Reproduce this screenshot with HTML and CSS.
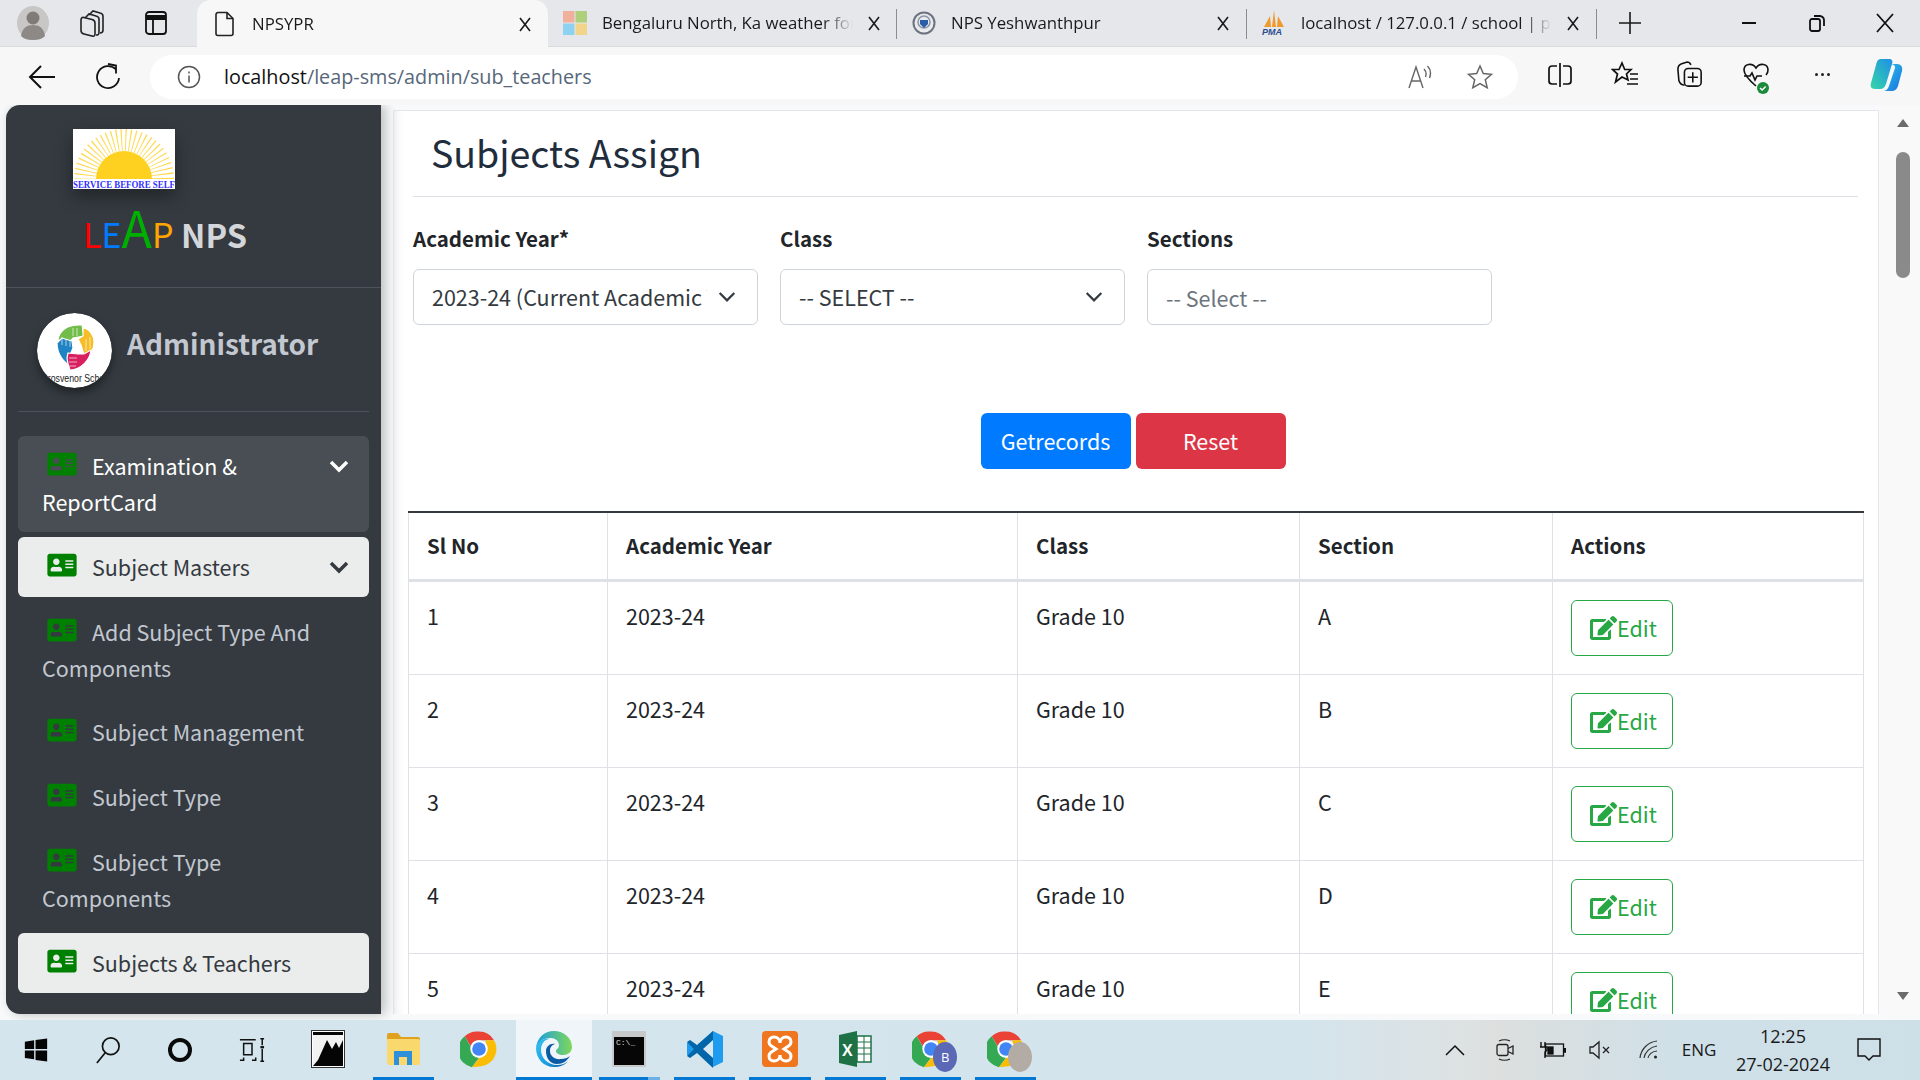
FILE: index.html
```html
<!DOCTYPE html>
<html>
  <head>
    <title>NPSYPR</title>
    <link rel="stylesheet" href="styles.css">
  </head>
  <body>
    <svg class="sprites" width="0" height="0">
      <symbol id="card" viewBox="0 0 576 512"><path d="M528 32H48C21.5 32 0 53.5 0 80v352c0 26.5 21.5 48 48 48h480c26.5 0 48-21.5 48-48V80c0-26.5-21.5-48-48-48zm-352 96c35.3 0 64 28.7 64 64s-28.7 64-64 64-64-28.7-64-64 28.7-64 64-64zm112 236.8c0 10.6-10 19.2-22.4 19.2H86.4C74 384 64 375.4 64 364.8v-19.2c0-31.8 30.1-57.6 67.2-57.6h5c12.3 5.1 25.7 8 39.8 8s27.6-2.9 39.8-8h5c37.1 0 67.2 25.8 67.2 57.6v19.2zM512 312c0 4.4-3.6 8-8 8H360c-4.4 0-8-3.6-8-8v-16c0-4.4 3.6-8 8-8h144c4.4 0 8 3.6 8 8v16zm0-64c0 4.4-3.6 8-8 8H360c-4.4 0-8-3.6-8-8v-16c0-4.4 3.6-8 8-8h144c4.4 0 8 3.6 8 8v16zm0-64c0 4.4-3.6 8-8 8H360c-4.4 0-8-3.6-8-8v-16c0-4.4 3.6-8 8-8h144c4.4 0 8 3.6 8 8v16z"/></symbol>
      <symbol id="edit" viewBox="0 0 576 512"><path d="M402.6 83.2l90.2 90.2c3.8 3.8 3.8 10 0 13.8L274.4 405.6l-92.8 10.3c-12.4 1.4-22.9-9.1-21.5-21.5l10.3-92.8L388.8 83.2c3.8-3.8 10-3.8 13.8 0zm162-22.9l-48.8-48.8c-15.2-15.2-39.9-15.2-55.2 0l-35.4 35.4c-3.8 3.8-3.8 10 0 13.8l90.2 90.2c3.8 3.8 10 3.8 13.8 0l35.4-35.4c15.2-15.3 15.2-40 0-55.2zM384 346.2V448H64V128h229.8c3.2 0 6.2-1.3 8.5-3.5l40-40c7.6-7.6 2.2-20.5-8.5-20.5H48C21.5 64 0 85.5 0 112v352c0 26.5 21.5 48 48 48h352c26.5 0 48-21.5 48-48V306.2c0-10.7-12.9-16-20.5-8.5l-40 40c-2.2 2.3-3.5 5.3-3.5 8.5z"/></symbol>
      <symbol id="close" viewBox="0 0 24 24"><path d="M7 6l10 13M17 6L7 19" fill="none" stroke="#1a1a1a" stroke-width="1.6"/></symbol>
      <symbol id="chrome" viewBox="0 0 48 48">
        <path d="M24 2a22 22 0 0 1 19 11H24a11 11 0 0 0-10.5 7.5L6 8A22 22 0 0 1 24 2z" fill="#ea4335"/>
        <path d="M6 8l9.5 16.5A10 10 0 0 0 24 35l-9 11.9A22 22 0 0 1 6 8z" fill="#34a853"/>
        <path d="M43 13a22 22 0 0 1-19 33l-9 0.9 9.5-12A11 11 0 0 0 33.5 19L32 13z" fill="#fbbc04"/>
        <circle cx="24" cy="24" r="11" fill="#fff"/>
        <circle cx="24" cy="24" r="8.6" fill="#4285f4"/>
      </symbol>
      <linearGradient id="edgeA" x1="0" y1="0" x2="1" y2="1"><stop offset="0" stop-color="#35c1f1"/><stop offset=".6" stop-color="#1b9de2"/><stop offset="1" stop-color="#0c59a4"/></linearGradient>
      <linearGradient id="edgeB" x1="0" y1="0" x2="1" y2="0"><stop offset="0" stop-color="#1b9de2"/><stop offset="1" stop-color="#7fd857"/></linearGradient>
      <linearGradient id="copA" x1="0" y1="0" x2="1" y2="1"><stop offset="0" stop-color="#2bc8e8"/><stop offset="1" stop-color="#1a6fe0"/></linearGradient>
      <linearGradient id="copB" x1="0" y1="1" x2="1" y2="0"><stop offset="0" stop-color="#35d6a6"/><stop offset="1" stop-color="#1f8fe8"/></linearGradient>
    </svg>

    <div class="tabbar">
      <div class="tb-slot slot-profile">
        <svg width="34" height="34" viewBox="0 0 34 34"><ellipse cx="17" cy="17" rx="16" ry="17" fill="#c9c7c5"/><circle cx="17" cy="12" r="6.5" fill="#7f7b78"/><path d="M5 30c1-8 6-11 12-11s11 3 12 11c-3 3-7 4-12 4s-9-1-12-4z" fill="#8d8986"/></svg>
      </div>
      <div class="tb-slot slot-work">
        <svg width="26" height="28" viewBox="0 0 26 28" fill="none" stroke="#222" stroke-width="1.6"><path d="M10 6l4-4 7 2c2 .5 3 1.500 3 3v14c0 3-2 3-3 3"/><path d="M6 9l4-4 7 2c2 .5 3 1.500 3 3v13c0 3-1 3-3 3"/><path d="M2 11c0-2 1-3 3-2.500l8 2c2 .5 3 1.500 3 3.500v11c0 2-1 2.500-3 2l-8-2c-2-.5-3-1.500-3-3.500z"/></svg>
      </div>
      <div class="tb-slot slot-vtabs">
        <svg width="22" height="26" viewBox="0 0 22 26" fill="none" stroke="#111" stroke-width="1.8"><rect x="1" y="2" width="20" height="22" rx="3"/><path d="M1 7.500h20" stroke-width="5"/><path d="M8 8v16"/></svg>
      </div>

      <div class="tab tab-active">
        <span class="fav">
          <svg width="20" height="26" viewBox="0 0 20 26" fill="none" stroke="#222" stroke-width="1.600"><path d="M3 1.500h9l6 6v15a2 2 0 0 1-2 2H3a2 2 0 0 1-2-2v-19a2 2 0 0 1 2-2z"/><path d="M12 1.500v6h6"/></svg>
        </span>
        <span class="tab-title">NPSYPR</span>
        <svg class="tab-x"><use href="#close"/></svg>
      </div>
      <div class="tab tab-first">
        <span class="fav">
          <svg width="24" height="24" viewBox="0 0 24 24"><rect width="11.500" height="11.500" fill="#f0b09c"/><rect x="12.500" width="11.500" height="11.500" fill="#aecf7c"/><rect y="12.500" width="11.500" height="11.500" fill="#8fd1f0"/><rect x="12.500" y="12.500" width="11.500" height="11.500" fill="#f2d58a"/></svg>
        </span>
        <span class="tab-title">Bengaluru North, Ka weather forecast</span>
        <svg class="tab-x"><use href="#close"/></svg>
      </div>
      <div class="tab-sep"></div>
      <div class="tab">
        <span class="fav">
          <svg width="24" height="24" viewBox="0 0 24 24"><circle cx="12" cy="12" r="10.500" fill="#e9eaee" stroke="#6d7480" stroke-width="2"/><circle cx="12" cy="11" r="6" fill="none" stroke="#8a94a3" stroke-width="1.500"/><path d="M8 9h8v4l-4 4-4-4z" fill="#2c5da8"/></svg>
        </span>
        <span class="tab-title">NPS Yeshwanthpur</span>
        <svg class="tab-x"><use href="#close"/></svg>
      </div>
      <div class="tab-sep"></div>
      <div class="tab">
        <span class="fav">
          <svg width="24" height="26" viewBox="0 0 24 26"><path d="M12 0l2 17h-4zM8 6l1 11H2zM16 6l6 11h-7z" fill="#ef9a2d"/><text x="0" y="25" class="pma">PMA</text></svg>
        </span>
        <span class="tab-title">localhost / 127.0.0.1 / school | phpMyAdmin</span>
        <svg class="tab-x"><use href="#close"/></svg>
      </div>
      <div class="tab-sep"></div>
      <div class="tb-slot slot-plus">
        <svg width="26" height="26" viewBox="0 0 26 26" stroke="#1a1a1a" stroke-width="1.600"><path d="M13 2v22M2 13h22"/></svg>
      </div>
      <div class="win-btns">
        <div class="tb-slot slot-win"><svg width="16" height="16" viewBox="0 0 16 16" stroke="#111" stroke-width="2"><path d="M1 8h14"/></svg></div>
        <div class="tb-slot slot-win"><svg width="16" height="18" viewBox="0 0 16 18" fill="none" stroke="#111" stroke-width="1.800"><rect x="1" y="5" width="10" height="12" rx="2"/><path d="M5 2h6c2 0 4 2 4 4v6"/></svg></div>
        <div class="tb-slot slot-win"><svg width="20" height="20" viewBox="0 0 20 20" stroke="#111" stroke-width="1.800"><path d="M2 1l16 18M18 1L2 19"/></svg></div>
      </div>
    </div>

    <div class="toolbar">
      <div class="tool tool-back">
        <svg width="28" height="26" viewBox="0 0 28 26" fill="none" stroke="#111" stroke-width="2"><path d="M27 13H2M13 2L2 13l11 11"/></svg>
      </div>
      <div class="tool tool-reload">
        <svg width="26" height="28" viewBox="0 0 26 28" fill="none" stroke="#111" stroke-width="1.800"><path d="M21 6.500A11 11 0 1 0 24 15"/><path d="M13 1l8 1.500v8"/></svg>
      </div>
      <div class="addressbar">
        <svg class="addr-info" width="24" height="24" viewBox="0 0 24 24" fill="none" stroke="#555" stroke-width="1.500"><circle cx="12" cy="12" r="10.500"/><path d="M12 10.500v7M12 6.500v2"/></svg>
        <span class="addr-url"><b>localhost</b>/leap-sms/admin/sub_teachers</span>
        <span class="addr-read">
          <svg width="26" height="26" viewBox="0 0 26 26" fill="none" stroke="#666" stroke-width="1.400"><path d="M2 24l7-21 7 21M4.500 17h9"/><path d="M17 5c2 2 2.500 5 1.500 8M20.500 2c3 3 3.500 8 2 12"/></svg>
        </span>
        <span class="addr-star">
          <svg width="26" height="26" viewBox="0 0 26 26" fill="none" stroke="#666" stroke-width="1.500"><path d="M13 2l3.300 7.500 8.200.8-6.200 5.400 1.900 8L13 19.500l-7.200 4.200 1.900-8L1.500 10.300l8.200-.8z"/></svg>
        </span>
      </div>
      <div class="tools-right">
        <div class="tool">
          <svg width="26" height="26" viewBox="0 0 26 26" fill="none" stroke="#111" stroke-width="1.700"><path d="M13 1v24"/><path d="M10 4H5a3 3 0 0 0-3 3v12a3 3 0 0 0 3 3h5M16 4h5a3 3 0 0 1 3 3v12a3 3 0 0 1-3 3h-5"/></svg>
        </div>
        <div class="tool">
          <svg width="28" height="28" viewBox="0 0 28 28" fill="none" stroke="#111" stroke-width="1.700"><path d="M11 2l2.700 6.500H20l-4.500 4.500 1.500 6L11 16l-6.500 5 2-8L1.500 8.500H8z"/><path d="M19 13h8M19 18h8M16 23h11"/></svg>
        </div>
        <div class="tool">
          <svg width="26" height="30" viewBox="0 0 28 30" fill="none" stroke="#111" stroke-width="1.700"><path d="M8 26c-3 0-5-2-6-5L1 9c0-3 1-5 4-6l6-2c2 0 3 1 4 3"/><rect x="8" y="8" width="18" height="19" rx="4"/><path d="M17 12v11M11.500 17.500h11"/></svg>
        </div>
        <div class="tool tool-health">
          <svg width="30" height="32" viewBox="0 0 30 32" fill="none" stroke="#111" stroke-width="1.600"><path d="M14 23C7 17 2 12 2 7c0-6 8-8 12-2 4-6 12-4 12 2 0 2-1 4-2 5"/><path d="M2 13h6l2-3 3 7 2-4h5"/><circle cx="21" cy="25" r="6" fill="#1a8a3c" stroke="none"/><path d="M18 25l2.200 2 3.500-3.500" stroke="#fff" stroke-width="1.500"/></svg>
        </div>
        <div class="tool tool-dots"><i></i><i></i><i></i></div>
        <div class="tool">
          <svg width="36" height="36" viewBox="0 0 36 36"><path d="M12 2h8c3 0 4 2 3 5l-6 20c-1 3-3 5-6 5H6c-4 0-5-3-4-6l5-18C8 4 9 2 12 2z" fill="url(#copB)"/><path d="M20 7h8c4 0 6 3 5 7l-4 15c-1 3-3 5-7 5h-8c3 0 5-2 6-5l6-18c.5-2-1-4-6-4z" fill="url(#copA)"/></svg>
        </div>
      </div>
    </div>

    <div class="page">
      <aside class="sidebar">
        <div class="brand">
          <svg class="brand-logo" width="102" height="60" viewBox="0 0 102 60">
            <rect width="102" height="60" fill="#fff"/>
            <circle cx="51" cy="50" r="39" fill="none" stroke="#ffd84a" stroke-width="22" stroke-dasharray="1 3.200"/>
            <circle cx="51" cy="50" r="28" fill="#fed121"/>
            <rect y="50" width="102" height="10" fill="#fff"/>
            <text x="0" y="59" textLength="102" lengthAdjust="spacingAndGlyphs" class="logo-motto">SERVICE BEFORE SELF</text>
          </svg>
          <div class="brand-name"><span class="l-red">L</span><span class="l-blue">E</span><span class="l-green">A</span><span class="l-orange">P</span> <b>NPS</b></div>
        </div>
        <div class="userpanel">
          <svg class="user-img" width="75" height="75" viewBox="0 0 75 75">
            <defs><clipPath id="avatarClip"><circle cx="37.500" cy="37.500" r="37.500"/></clipPath></defs>
            <g clip-path="url(#avatarClip)">
              <rect width="75" height="75" fill="#fff"/>
              <g class="avatar-hands">
                <path d="M21 27c1-9 9-16 24-15l2 11-11 2-4 5c-4-2-8-3-11-3z" fill="#72bd4a"/>
                <path d="M46 15c7 1 11 8 11 14 0 6-2 11-6 14l-4-1-3-10-3-6 5-3z" fill="#f6bd27"/>
                <path d="M20 30l5-5 3 1 7 2 1 7-3 7 2 11c-8-2-15-12-15-23z" fill="#1f83c4"/>
                <path d="M31 40l10 1 6 0 7-4c-1 10-10 20-21 20l-2-6-1-6z" fill="#d81f5f"/>
              </g>
              <path class="avatar-fingers" d="M25 25v7M29 26v7M33 28v6M32 45h8M32 49h8M32 53h7M49 26v12M53 24v12M40 15v8M36 15v8"/>
              <text x="4" y="69" textLength="70" lengthAdjust="spacingAndGlyphs" class="avatar-text">Grosvenor School</text>
            </g>
          </svg>
          <span class="user-name">Administrator</span>
        </div>
        <nav class="nav">
          <a class="nav-link nav-open">
            <svg class="nav-icon"><use href="#card"/></svg>Examination &amp; ReportCard
            <svg class="nav-arrow" viewBox="0 0 20 14"><path d="M2 3l8 8 8-8"/></svg>
          </a>
          <a class="nav-link nav-active">
            <svg class="nav-icon"><use href="#card"/></svg>Subject Masters
            <svg class="nav-arrow" viewBox="0 0 20 14"><path d="M2 3l8 8 8-8"/></svg>
          </a>
          <a class="nav-link"><svg class="nav-icon"><use href="#card"/></svg>Add Subject Type And Components</a>
          <a class="nav-link"><svg class="nav-icon"><use href="#card"/></svg>Subject Management</a>
          <a class="nav-link"><svg class="nav-icon"><use href="#card"/></svg>Subject Type</a>
          <a class="nav-link"><svg class="nav-icon"><use href="#card"/></svg>Subject Type Components</a>
          <a class="nav-link nav-active"><svg class="nav-icon"><use href="#card"/></svg>Subjects &amp; Teachers</a>
        </nav>
      </aside>

      <main class="content">
        <div class="card">
          <h1 class="card-title">Subjects Assign</h1>
          <div class="filters">
            <div class="field">
              <label>Academic Year*</label>
              <div class="select-wrap">
                <select class="form-control"><option>2023-24 (Current Academic Year)</option></select>
                <svg class="select-arrow" viewBox="0 0 16 10"><path d="M1.500 1.500L8 8l6.500-6.500"/></svg>
              </div>
            </div>
            <div class="field">
              <label>Class</label>
              <div class="select-wrap">
                <select class="form-control"><option>-- SELECT --</option></select>
                <svg class="select-arrow" viewBox="0 0 16 10"><path d="M1.500 1.500L8 8l6.500-6.500"/></svg>
              </div>
            </div>
            <div class="field">
              <label>Sections</label>
              <input class="form-control" placeholder="-- Select --">
            </div>
          </div>
          <div class="form-actions">
            <button class="btn btn-primary">Getrecords</button>
            <button class="btn btn-danger">Reset</button>
          </div>
          <table class="data-table">
            <thead>
              <tr><th class="col-no">Sl No</th><th class="col-year">Academic Year</th><th class="col-class">Class</th><th class="col-section">Section</th><th>Actions</th></tr>
            </thead>
            <tbody>
              <tr><td>1</td><td>2023-24</td><td>Grade 10</td><td>A</td><td><button class="btn btn-edit"><svg><use href="#edit"/></svg>Edit</button></td></tr>
              <tr><td>2</td><td>2023-24</td><td>Grade 10</td><td>B</td><td><button class="btn btn-edit"><svg><use href="#edit"/></svg>Edit</button></td></tr>
              <tr><td>3</td><td>2023-24</td><td>Grade 10</td><td>C</td><td><button class="btn btn-edit"><svg><use href="#edit"/></svg>Edit</button></td></tr>
              <tr><td>4</td><td>2023-24</td><td>Grade 10</td><td>D</td><td><button class="btn btn-edit"><svg><use href="#edit"/></svg>Edit</button></td></tr>
              <tr><td>5</td><td>2023-24</td><td>Grade 10</td><td>E</td><td><button class="btn btn-edit"><svg><use href="#edit"/></svg>Edit</button></td></tr>
            </tbody>
          </table>
        </div>
      </main>

      <div class="scrollbar">
        <svg width="14" height="10" viewBox="0 0 14 10"><path d="M7 1l6 8H1z" fill="#6b6b6b"/></svg>
        <div class="scroll-thumb"></div>
        <svg class="scroll-down" width="14" height="10" viewBox="0 0 14 10"><path d="M7 9L1 1h12z" fill="#6b6b6b"/></svg>
      </div>
    </div>

    <div class="taskbar">
      <div class="task task-sys">
        <svg width="26" height="28" viewBox="0 0 28 28" fill="#050505"><path d="M2 5l10-1.500V13H2zM13.500 3.300L26 1.500V13H13.500zM2 14.500h10V24L2 22.500zM13.500 14.500H26v12l-12.500-1.800z"/></svg>
      </div>
      <div class="task task-sys">
        <svg width="26" height="30" viewBox="0 0 28 30" fill="none" stroke="#111" stroke-width="1.800"><circle cx="17" cy="11" r="9"/><path d="M11 18L2 29"/></svg>
      </div>
      <div class="task task-sys">
        <svg width="26" height="26" viewBox="0 0 26 26" fill="none" stroke="#0a0a0a" stroke-width="4"><circle cx="13" cy="13" r="10"/></svg>
      </div>
      <div class="task task-sys">
        <svg width="26" height="28" viewBox="0 0 28 28" fill="none" stroke="#111" stroke-width="1.600"><path d="M1 3h17M1 25h4v-3M14 25h4v-3M5 7h9v12H5zM23 2h4M25 2v7M25 13v13M23 26h4"/><path d="M23 11h4" stroke-width="2.500"/></svg>
      </div>
      <div class="task task-app task-photos">
        <svg width="34" height="38" viewBox="0 0 34 38"><rect x="0.500" y="0.500" width="33" height="37" fill="#fff" stroke="#333"/><rect x="2" y="2" width="30" height="34" fill="#050505"/><path d="M2 5h30v5l-4 8-3-6-4 7-5-9-9 20-5 6z" fill="#fff" opacity=".95"/></svg>
      </div>
      <div class="task task-app task-run">
        <svg width="34" height="36" viewBox="0 0 34 36"><path d="M1 4a2 2 0 0 1 2-2h9l3 4h17a2 2 0 0 1 2 2v3H1z" fill="#e0a11f"/><path d="M1 8h31a2 2 0 0 1 2 2v22a2 2 0 0 1-2 2H3a2 2 0 0 1-2-2z" fill="#f9d86d"/><path d="M8 34V20h18v14h-5v-8h-8v8z" fill="#2e8fdb"/></svg>
      </div>
      <div class="task task-app">
        <svg width="38" height="38"><use href="#chrome"/></svg>
      </div>
      <div class="task task-edge">
        <svg width="38" height="38" viewBox="0 0 38 38"><path d="M19 1c10 0 18 7 18 16 0 5-4 8-9 8-4 0-7-2-7-4 0-2 3-2 3-6 0-4-4-7-8-7C8 8 3 12 1 18 2 8 9 1 19 1z" fill="url(#edgeB)"/><path d="M1 18c1-6 7-10 13-9-5 1-8 5-8 11 0 8 7 15 16 15 4 0 8-1 11-4-3 4-8 6-14 6C9 37 1 29 1 18z" fill="url(#edgeA)"/><path d="M11 21c0-4 4-8 9-7-3 1-5 3-5 7 0 5 5 9 11 8 3 0 7-1 9-3-3 5-7 8-13 8-7 0-11-6-11-13z" fill="#0b5aa6"/></svg>
      </div>
      <div class="task task-app task-run task-run-two">
        <svg width="34" height="36" viewBox="0 0 34 36"><rect width="34" height="36" rx="1" fill="#c6c8ca"/><rect x="2" y="6" width="30" height="28" fill="#060606"/><text x="4" y="14" class="cmd-text">C:\_</text></svg>
      </div>
      <div class="task task-app task-run">
        <svg width="38" height="38" viewBox="0 0 38 38"><path d="M27 1l10 5v26l-10 5-16-15-7 5-3-2v-12l3-2 7 5z" fill="#1f9cf0"/><path d="M27 1L11 15 4 10l-3 2 7 7-7 7 3 2 7-5 16 15z" fill="#0065a9"/><path d="M27 10v18l-10-9z" fill="#d7e8f3"/></svg>
      </div>
      <div class="task task-app task-run">
        <svg width="36" height="36" viewBox="0 0 36 36"><rect width="36" height="36" rx="4" fill="#f0751f"/><path d="M18 12c0-4-3-6-6-6s-5 2-5 5 2 4 4 5l3 2-3 2c-2 1-4 2-4 5s2 5 5 5 6-2 6-6c0 4 3 6 6 6s5-2 5-5-2-4-4-5l-3-2 3-2c2-1 4-2 4-5s-2-5-5-5-6 2-6 6z" fill="none" stroke="#fff" stroke-width="3"/></svg>
      </div>
      <div class="task task-app task-run">
        <svg width="34" height="36" viewBox="0 0 34 36"><path d="M1 4l18-4v36L1 32z" fill="#1e7145"/><rect x="19" y="5" width="14" height="26" fill="#fff" stroke="#1e7145" stroke-width="1.500"/><path d="M19 11h14M19 17h14M19 23h14M26 5v26" stroke="#1e7145"/><text x="4" y="25" class="xl-text">X</text></svg>
      </div>
      <div class="task task-app task-run task-over">
        <svg width="38" height="38"><use href="#chrome"/></svg>
        <span class="task-badge badge-b">B</span>
      </div>
      <div class="task task-app task-run task-over">
        <svg width="38" height="38"><use href="#chrome"/></svg>
        <span class="task-badge badge-pic"></span>
      </div>

      <div class="tray">
        <div class="tray-item tray-w50">
          <svg width="20" height="12" viewBox="0 0 20 12" fill="none" stroke="#111" stroke-width="1.500"><path d="M1 11l9-9 9 9"/></svg>
        </div>
        <div class="tray-item tray-w50">
          <svg width="18" height="24" viewBox="0 0 18 24" fill="none" stroke="#222" stroke-width="1.300"><rect x="1" y="6.500" width="11" height="11" rx="2"/><path d="M12 10.500l5-2.500v8l-5-2.500M3 3c3-1.500 8-1.500 11 0M3 21c3 1.500 8 1.500 11 0"/></svg>
        </div>
        <div class="tray-item tray-w45">
          <svg width="26" height="18" viewBox="0 0 26 18" fill="none" stroke="#111" stroke-width="1.300"><rect x="5.500" y="3" width="18" height="12"/><path d="M24 7v4h1.500V7" fill="#111"/><rect x="8" y="6" width="5" height="7" fill="#111"/><path d="M1 1v5M5 1v5M0 6h7v3l-2 2v6" stroke-width="1.400"/></svg>
        </div>
        <div class="tray-item tray-w49">
          <svg width="22" height="20" viewBox="0 0 22 20" fill="none" stroke="#222" stroke-width="1.300"><path d="M1 7v6h3l6 5V2L4 7zM14 7l6 6M20 7l-6 6"/></svg>
        </div>
        <div class="tray-item tray-w50">
          <svg width="20" height="20" viewBox="0 0 20 20" fill="none" stroke="#333" stroke-width="1.200"><path d="M1 18C2 9 9 2 18 1M5 18c1-6 6-11 13-12M9 18c.5-3 4-7 9-7"/><circle cx="16.500" cy="17" r="1.500" fill="#222" stroke="none"/></svg>
        </div>
        <div class="tray-item tray-w50 tray-lang">ENG</div>
        <div class="tray-clock"><span>12:25</span><span>27-02-2024</span></div>
        <div class="tray-item tray-notify">
          <svg width="24" height="24" viewBox="0 0 24 24" fill="none" stroke="#111" stroke-width="1.400"><path d="M1 1h22v17h-7l-4 4-4-4H1z"/></svg>
        </div>
      </div>
    </div>
  </body>
</html>
```

FILE: styles.css
```css
/* Everything on the page is at 150% browser zoom, so the base line is 36px */
* {
  box-sizing: border-box;
}

html,
body {
  height: 100%;
}

body {
  margin: 0;
  width: 1920px;
  height: 1080px;
  overflow: hidden;
  display: flex;
  flex-direction: column;
  font-family: "Noto Sans CJK SC", "Noto Sans", sans-serif;
  font-size: 21.500px;
  line-height: 36px;
  color: #212529;
  background: #f7f7f7;
}

.sprites {
  position: absolute;
}

/* Browser tabs */
.tabbar {
  height: 47px;
  flex: none;
  display: flex;
  align-items: flex-end;
  background: #e5e7eb;
  font-family: "Open Sans", sans-serif;
  font-size: 16.800px;
  line-height: 24px;
  color: #1a1a1a;
  border-bottom: 1px solid #d9dadc;
}

.tb-slot {
  height: 46px;
  flex: none;
  display: flex;
  align-items: center;
  justify-content: center;
}

.slot-profile { width: 66px; }
.slot-work { width: 52px; }
.slot-vtabs { width: 76px; }
.slot-plus { width: 66px; }
.slot-win { width: 68px; }

.slot-vtabs {
  margin-right: 3px;
}

.win-btns {
  margin-left: auto;
  margin-right: 1px;
  display: flex;
}

.tab {
  width: 349px;
  height: 46px;
  flex: none;
  padding: 0 11px 0 15px;
  display: flex;
  align-items: center;
  overflow: hidden;
}

.tab-active {
  width: 351px;
  height: 47px;
  margin-bottom: -1px;
  padding-left: 16px;
  background: #f7f7f7;
  border-radius: 14px 14px 0 0;
}

.fav {
  width: 24px;
  height: 26px;
  flex: none;
  margin-right: 15px;
  display: flex;
  align-items: center;
  justify-content: center;
}

.tab-title {
  flex: 1;
  min-width: 0;
  margin-right: 9px;
  white-space: nowrap;
  overflow: hidden;
  -webkit-mask-image: linear-gradient(to right, #000 calc(100% - 30px), transparent 100%);
  mask-image: linear-gradient(to right, #000 calc(100% - 30px), transparent 100%);
}

.tab-x {
  width: 24px;
  height: 24px;
  flex: none;
}

.tab-sep {
  width: 1px;
  height: 30px;
  flex: none;
  margin-bottom: 7px;
  background: #8b8d90;
}

.tab-first + .tab-sep {
  margin-left: -1px;
}

.pma {
  font-family: "Liberation Sans", sans-serif;
  font-size: 9px;
  font-weight: 700;
  font-style: italic;
  fill: #2b4d8f;
}

/* Address bar row */
.toolbar {
  height: 58px;
  flex: none;
  display: flex;
  align-items: center;
  padding: 1px 13px 0 22px;
  background: #f7f7f7;
}

.tool {
  width: 40px;
  height: 40px;
  flex: none;
  display: flex;
  align-items: center;
  justify-content: center;
}

.tool-back {
  margin-right: 26px;
}

.tool-reload {
  margin-right: 22px;
}

.tool-health {
  margin: 4px 0 0 3px;
}

.addressbar {
  width: 1368px;
  height: 44px;
  flex: none;
  display: flex;
  align-items: center;
  padding: 0 25px 0 27px;
  background: #fff;
  border-radius: 22px;
  font-family: "Open Sans", sans-serif;
  font-size: 19.800px;
  line-height: 24px;
  color: #56677a;
}

.addr-info {
  flex: none;
  margin-right: 23px;
}

.addr-url b {
  font-weight: 400;
  color: #111;
}

.addr-read {
  margin-left: auto;
  margin-right: 34px;
  display: flex;
}

.addr-star {
  display: flex;
}

.tools-right {
  flex: 1;
  margin-left: 22px;
  display: flex;
  justify-content: space-between;
}

.tool-dots {
  gap: 3px;
}

.tool-dots i {
  width: 3px;
  height: 3px;
  border-radius: 50%;
  background: #222;
}

/* Page area */
.page {
  height: 915px;
  flex: none;
  display: flex;
  background: #f8f9fa;
  overflow: hidden;
}

.sidebar {
  width: 375px;
  height: 909px;
  flex: none;
  margin-left: 6px;
  overflow: hidden;
  background: #343a40;
  color: #c2c7d0;
  border-radius: 14px 0 0 14px;
  box-shadow: 4px 0 12px rgba(0, 0, 0, 0.25);
  position: relative;
}

.brand {
  height: 183px;
  padding: 24px 0 0 67px;
  border-bottom: 1px solid #4b545c;
}

.brand-logo {
  display: block;
  box-shadow: 0 8px 16px rgba(0, 0, 0, 0.35);
}

.brand-name {
  margin: 10px 0 0 10px;
  font-size: 34px;
  line-height: 54px;
  white-space: nowrap;
}

.brand-name b {
  color: #d4d6d9;
  font-size: 32.500px;
  font-weight: 700;
}

.l-red { color: #f00; }
.l-blue { color: #007bff; }
.l-green { color: #00b000; font-size: 50px; }
.l-orange { color: #ffa500; }

.logo-motto {
  font-family: "Liberation Serif", serif;
  font-size: 10px;
  font-weight: 700;
  fill: #2f2fff;
}

.userpanel {
  height: 124px;
  margin: 0 12px;
  padding: 25px 0 0 19px;
  display: flex;
  align-items: flex-start;
  border-bottom: 1px solid #4b545c;
}

.user-img {
  flex: none;
  margin-right: 15px;
  border-radius: 50%;
  box-shadow: 0 5px 10px rgba(0, 0, 0, 0.4);
}

.avatar-hands path {
  stroke: #fff;
  stroke-width: 1.200;
}

.avatar-fingers {
  fill: none;
  stroke: #fff;
  stroke-width: 0.800;
  opacity: 0.8;
}

.avatar-text {
  font-family: "Liberation Sans", sans-serif;
  font-size: 11px;
  fill: #222;
}

.user-name {
  font-size: 28px;
  font-weight: 700;
  line-height: 60px;
  color: #c2c7d0;
}

.nav {
  padding: 24px 12px 0;
  display: flex;
  flex-direction: column;
  gap: 4.800px;
}

.nav-link {
  display: block;
  position: relative;
  padding: 12px 24px;
  border-radius: 6px;
}

.nav-icon {
  width: 30px;
  height: 26px;
  margin: 0 15px 0 5px;
  vertical-align: -2px;
  fill: #008000;
}

.nav-open {
  background: rgba(255, 255, 255, 0.1);
  color: #fff;
}

.nav-active {
  background: #ebecec;
  color: #343a40;
}

.nav-arrow {
  width: 20px;
  height: 14px;
  position: absolute;
  top: 23px;
  right: 20px;
  fill: none;
  stroke: currentColor;
  stroke-width: 3.500;
}

/* Main card */
.content {
  flex: 1;
  min-width: 0;
  margin: 5px 0 6px 12px;
  overflow: hidden;
}

.card {
  height: 100%;
  padding: 0 20px 0 14px;
  background: #fff;
  border: 1px solid #e3e6ea;
  border-bottom: 0;
  box-shadow: inset 12px 0 12px -12px rgba(0, 0, 0, 0.12);
}

.card-title {
  margin: 0 0 0 5px;
  height: 86px;
  padding: 14px 0 0 18px;
  font-size: 37.500px;
  font-weight: 400;
  line-height: 54px;
  color: #1f2d3d;
  border-bottom: 1px solid #dee2e6;
}

.filters {
  margin: 23px 0 0 5px;
  display: flex;
  gap: 22px;
}

.field {
  width: 345px;
}

.field label {
  display: block;
  margin-bottom: 13px;
  font-size: 20.500px;
  font-weight: 700;
  white-space: nowrap;
}

.select-wrap {
  position: relative;
}

.form-control {
  display: block;
  width: 100%;
  height: 56px;
  padding: 9px 50px 9px 18px;
  font: inherit;
  color: #343a40;
  background: #fff;
  border: 1px solid #ced4da;
  border-radius: 6px;
  appearance: none;
  -webkit-appearance: none;
  outline: none;
}

.form-control::placeholder {
  color: #6c757d;
  opacity: 1;
}

.select-arrow {
  width: 18px;
  height: 12px;
  position: absolute;
  top: 22px;
  right: 22px;
  fill: none;
  stroke: #343a40;
  stroke-width: 2;
}

.form-actions {
  margin-top: 88px;
  display: flex;
  justify-content: center;
  gap: 5px;
}

.btn {
  height: 56px;
  padding: 9px 18px;
  font: inherit;
  border: 1px solid transparent;
  border-radius: 6px;
}

.btn-primary {
  width: 150px;
  color: #fff;
  background: #007bff;
}

.btn-danger {
  width: 150px;
  color: #fff;
  background: #dc3545;
}

.btn-edit {
  width: 102px;
  display: flex;
  align-items: center;
  white-space: nowrap;
  color: #28a745;
  background: #fff;
  border-color: #28a745;
}

.btn-edit svg {
  width: 27px;
  height: 24px;
  flex: none;
  fill: #28a745;
}

.data-table {
  width: 1456px;
  margin-top: 42px;
  table-layout: fixed;
  border-collapse: collapse;
  border-top: 2px solid #343a40;
}

.data-table th,
.data-table td {
  padding: 18px;
  line-height: 32px;
  text-align: left;
  vertical-align: top;
  border: 1px solid #dee2e6;
  border-top: 0;
}

.data-table td {
  height: 93px;
  color: #212529;
}

.data-table thead th {
  height: 68px;
  padding: 16px 18px 13px;
  font-weight: 700;
  font-size: 20.500px;
  border-bottom: 3px solid #dee2e6;
}

.col-no { width: 199px; }
.col-year { width: 410px; }
.col-class { width: 282px; }
.col-section { width: 253px; }

.scrollbar {
  width: 41px;
  flex: none;
  padding: 13px 10px 0 17px;
  display: flex;
  flex-direction: column;
  align-items: center;
  height: 909px;
  background: #f9f9f9;
}

.scroll-thumb {
  width: 14px;
  height: 126px;
  margin-top: 24px;
  border-radius: 7px;
  background: #8a8a8a;
}

.scroll-down {
  margin-top: auto;
  margin-bottom: 13px;
}

/* Windows taskbar */
.taskbar {
  height: 60px;
  flex: none;
  display: flex;
  align-items: stretch;
  background: linear-gradient(to right, #d5e5ed 0%, #d4e4ec 68%, #dde2e3 76%, #dcdfde 78%, #cfe0e8 88%, #cddfe7 100%);
  font-family: "Open Sans", sans-serif;
  font-size: 18px;
  line-height: 24px;
  color: #1a1a1a;
}

.task {
  flex: none;
  display: flex;
  align-items: center;
  justify-content: center;
  position: relative;
}

.task-sys {
  width: 72px;
}

.task-app {
  width: 61.300px;
  margin: 0 7px;
  border-bottom: 3px solid transparent;
}

.task-photos {
  margin-left: 9.500px;
}

.task-run {
  border-bottom-color: #0078d4;
}

.task-run-two {
  border-image: linear-gradient(to right, #0078d4 80%, #6cb0e8 80%) 1;
}

.task-edge {
  width: 75.300px;
  background: #eff5f8;
  border-bottom: 3px solid #0078d4;
}

.task-badge {
  width: 24px;
  height: 30px;
  position: absolute;
  right: 4px;
  bottom: 5px;
  border-radius: 50%;
  font-size: 13px;
  line-height: 30px;
  text-align: center;
}

.badge-b {
  color: #fff;
  background: #5b68b5;
}

.badge-pic {
  background: #b3aca5;
}

.cmd-text {
  font-family: "Liberation Mono", monospace;
  font-size: 8px;
  fill: #ddd;
}

.xl-text {
  font-family: "Liberation Sans", sans-serif;
  font-size: 16px;
  font-weight: 700;
  fill: #fff;
}

.tray {
  margin-left: auto;
  padding-right: 24px;
  display: flex;
  align-items: center;
}

.tray-item {
  flex: none;
  display: flex;
  align-items: center;
  justify-content: center;
}

.tray-w50 { width: 50px; }
.tray-w45 { width: 45px; }
.tray-w49 { width: 49px; }

.tray-lang {
  font-size: 17px;
}

.tray-clock {
  width: 118px;
  flex: none;
  display: flex;
  flex-direction: column;
  align-items: center;
  line-height: 28px;
  font-size: 18px;
}

.tray-notify {
  width: 54px;
}
```
